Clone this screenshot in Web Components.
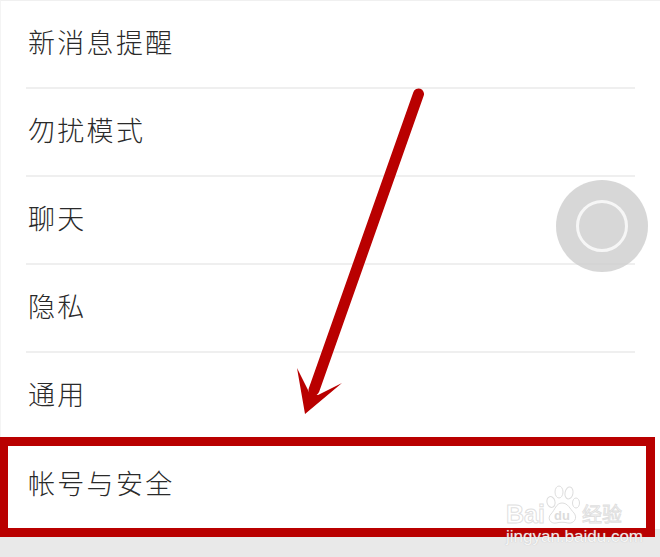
<!DOCTYPE html>
<html lang="zh">
<head>
<meta charset="utf-8">
<title>设置</title>
<style>
  html, body { margin: 0; height: 557px; overflow: hidden; background: #fff; }
  body { font-family: "Noto Sans CJK SC", "Liberation Sans", sans-serif; }
</style>
</head>
<body>
<settings-page>
  <setting-row>新消息提醒</setting-row>
  <setting-row>勿扰模式</setting-row>
  <setting-row>聊天</setting-row>
  <setting-row>隐私</setting-row>
  <setting-row>通用</setting-row>
  <setting-row last>帐号与安全</setting-row>
  <float-ball slot="over"></float-ball>
  <highlight-box slot="over"></highlight-box>
  <guide-arrow slot="over"></guide-arrow>
  <baidu-mark slot="over"></baidu-mark>
</settings-page>

<script>
const templatePage = document.createElement('template');
templatePage.innerHTML = `
  <style>
    :host {
      display: flex;
      flex-direction: column;
      position: relative;
      width: 660px;
      height: 557px;
      overflow: hidden;
      background: #e9e9e9;
    }
    .list {
      display: flex;
      flex-direction: column;
      background: #fff;
      border-top: 1px solid #f0f0f0;
      border-left: 1px solid #f4f4f4;
    }
  </style>
  <div class="list"><slot></slot></div>
  <slot name="over"></slot>
`;

class SettingsPage extends HTMLElement {
  constructor() {
    super();
    this.shadow = this.attachShadow({ mode: 'open' });
    this.shadow.appendChild(templatePage.content.cloneNode(true));
  }
}

const templateRow = document.createElement('template');
templateRow.innerHTML = `
  <style>
    :host {
      display: flex;
      align-items: center;
      box-sizing: border-box;
      height: 88px;
      margin: 0 25px;
      border-bottom: 2px solid #efefef;
      padding: 0 0 6px 2px;
      font-size: 27px;
      font-weight: 300;
      letter-spacing: 2.3px;
      color: #2a2a2a;
    }
    :host([last]) { border-bottom: 0; }
  </style>
  <slot></slot>
`;

class SettingRow extends HTMLElement {
  constructor() {
    super();
    this.shadow = this.attachShadow({ mode: 'open' });
    this.shadow.appendChild(templateRow.content.cloneNode(true));
  }
}

const templateBall = document.createElement('template');
templateBall.innerHTML = `
  <style>
    :host {
      position: absolute;
      left: 556px;
      top: 180px;
      width: 92px;
      height: 92px;
      display: flex;
      align-items: center;
      justify-content: center;
      border-radius: 50%;
      background: rgba(205, 205, 205, 0.8);
    }
    .ring {
      box-sizing: border-box;
      width: 52px;
      height: 52px;
      border: 3px solid #f6f6f6;
      border-radius: 50%;
    }
  </style>
  <div class="ring"></div>
`;

class FloatBall extends HTMLElement {
  constructor() {
    super();
    this.shadow = this.attachShadow({ mode: 'open' });
    this.shadow.appendChild(templateBall.content.cloneNode(true));
  }
}

const templateBox = document.createElement('template');
templateBox.innerHTML = `
  <style>
    :host {
      position: absolute;
      left: 0;
      top: 437px;
      width: 655px;
      height: 100px;
      box-sizing: border-box;
      border: 9px solid #b90000;
      border-left-width: 8px;
    }
  </style>
`;

class HighlightBox extends HTMLElement {
  constructor() {
    super();
    this.shadow = this.attachShadow({ mode: 'open' });
    this.shadow.appendChild(templateBox.content.cloneNode(true));
  }
}

const templateArrow = document.createElement('template');
templateArrow.innerHTML = `
  <style>
    :host { position: absolute; left: 0; top: 0; width: 660px; height: 557px; pointer-events: none; }
    svg { display: block; }
  </style>
  <svg width="660" height="557" viewBox="0 0 660 557">
    <path d="M418.5 94 L314 390" stroke="#b90000" stroke-width="11" stroke-linecap="round" fill="none"/>
    <path d="M297 368 L309 392 L318 395 L342 383 L305 414 Z" fill="#b90000"/>
  </svg>
`;

class GuideArrow extends HTMLElement {
  constructor() {
    super();
    this.shadow = this.attachShadow({ mode: 'open' });
    this.shadow.appendChild(templateArrow.content.cloneNode(true));
  }
}

const templateMark = document.createElement('template');
templateMark.innerHTML = `
  <style>
    :host {
      position: absolute;
      left: 506px;
      top: 484px;
      width: 120px;
      height: 60px;
      font-family: "Liberation Sans", "Noto Sans CJK SC", sans-serif;
      color: rgba(255, 255, 255, 0.75);
      pointer-events: none;
    }
    .top { display: flex; align-items: flex-end; height: 42px; }
    .bai {
      font-size: 25px;
      font-weight: bold;
      line-height: 24px;
      width: 38px;
      -webkit-text-stroke: 1px rgba(215, 215, 215, 0.8);
    }
    .jy {
      font-family: "Noto Sans CJK SC", sans-serif;
      font-size: 20px;
      line-height: 24px;
      margin-left: 1px;
      -webkit-text-stroke: 1px rgba(215, 215, 215, 0.8);
    }
    svg { display: block; flex: none; }
    .url {
      font-size: 17px;
      line-height: 16px;
      margin-top: 3px;
      white-space: nowrap;
      color: rgba(255, 255, 255, 0.85);
      text-shadow: 0 0 1px rgba(170, 170, 170, 0.8);
    }
  </style>
  <div class="top">
    <span class="bai">Bai</span>
    <svg width="37" height="42" viewBox="0 0 37 42" fill="rgba(255,255,255,.7)" stroke="rgba(215,215,215,.85)" stroke-width="1">
      <ellipse cx="7" cy="18" rx="4" ry="5.5" transform="rotate(-15 7 18)"/>
      <ellipse cx="15" cy="8" rx="4" ry="6"/>
      <ellipse cx="25" cy="9" rx="4" ry="6" transform="rotate(10 25 9)"/>
      <ellipse cx="32" cy="19" rx="3.5" ry="5"/>
      <path d="M18 19 C24 19 26 25 30 29 C34 34 30 40 24 39 C20 38 16 38 12 39 C6 40 3 34 7 30 C11 26 12 19 18 19 Z"/>
      <text x="10" y="36" font-family="Liberation Sans" font-size="13" font-weight="bold" fill="rgba(215,215,215,.9)" stroke="none">du</text>
    </svg>
    <span class="jy">经验</span>
  </div>
  <div class="url">jingyan.baidu.com</div>
`;

class BaiduMark extends HTMLElement {
  constructor() {
    super();
    this.shadow = this.attachShadow({ mode: 'open' });
    this.shadow.appendChild(templateMark.content.cloneNode(true));
  }
}

window.customElements.define('settings-page', SettingsPage);
window.customElements.define('setting-row', SettingRow);
window.customElements.define('float-ball', FloatBall);
window.customElements.define('highlight-box', HighlightBox);
window.customElements.define('guide-arrow', GuideArrow);
window.customElements.define('baidu-mark', BaiduMark);
</script>
</body>
</html>
